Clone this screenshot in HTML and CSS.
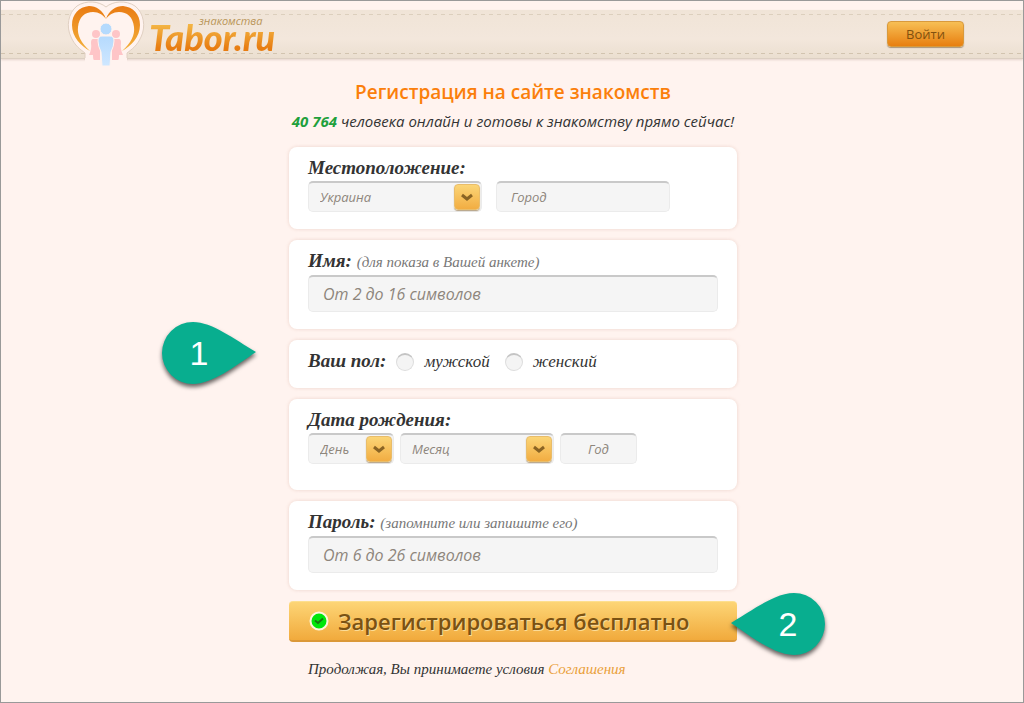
FILE: index.html
```
<!DOCTYPE html>
<html lang="ru">
<head>
  <meta charset="UTF-8">
  <meta name="viewport" content="width=device-width, initial-scale=1">
  <title>Tabor.ru</title>
  <link rel="stylesheet" href="styles.css">
</head>
<body>
  <header class="header">
    <div class="header-inner">
      <a href="#" class="logo">
        <svg class="logo-heart" width="80" height="68" viewBox="0 0 80 68" aria-hidden="true">
          <defs>
            <linearGradient id="heart" x1="0" y1="0" x2="0" y2="1">
              <stop offset="0" stop-color="#e97b12"/>
              <stop offset="1" stop-color="#f3b13c"/>
            </linearGradient>
            <linearGradient id="man" x1="0" y1="0" x2="0" y2="1">
              <stop offset="0" stop-color="#b5dafd"/>
              <stop offset="1" stop-color="#cfe7ff"/>
            </linearGradient>
          </defs>
          <path class="logo-back" d="M40 7C33 1 20 0 11 6C2 13 0 27 5 37C9 46 14 49 19 53V60H61V53C66 49 71 46 75 37C80 27 78 13 69 6C60 0 47 1 40 7Z"/>
          <path class="logo-under" d="M19 58H61V68H19Z"/>
          <path fill="url(#heart)" d="M40 19C37 10 30 6 23 6C13 7 6 14 6 25C6 37 15 46 24 51C15 43 11 35 12 27C13 17 19 12 27 12C33 12 37 15 40 19C43 15 47 12 53 12C61 12 67 17 68 27C69 35 65 43 56 51C65 46 74 37 74 25C74 14 67 7 57 6C50 6 43 10 40 19Z"/>
          <g fill="#fec5c7">
            <circle cx="30" cy="34" r="4"/>
            <circle cx="50" cy="34" r="4"/>
            <path d="M27 39H34V60H28Q27 60 27 55H23Q26 49 25 43Q25 39 27 39Z"/>
            <path d="M53 39H46V60H52Q53 60 53 55H57Q54 49 55 43Q55 39 53 39Z"/>
          </g>
          <circle cx="40" cy="29" r="6" fill="#b5dafd" stroke="#fff3ef"/>
          <path fill="url(#man)" stroke="#fff3ef" d="M36 36H44Q48 36 48 41Q48 46 45 52L44 66H36L35 52Q32 46 32 41Q32 36 36 36Z"/>
        </svg>
        <span class="logo-text">
          <span class="logo-tag">знакомства</span>
          <span class="logo-name">Tabor.ru</span>
        </span>
      </a>
      <button type="button" class="login">Войти</button>
    </div>
  </header>

  <main class="main">
    <h1>Регистрация на сайте знакомств</h1>
    <p class="online"><strong>40 764</strong> человека онлайн и готовы к знакомству прямо сейчас!</p>

    <form class="form">
      <div class="card">
        <label class="title" for="country">Местоположение:</label>
        <div class="row place">
          <span class="select">
            <select id="country"><option>Украина</option></select>
            <span class="arrow"><svg width="12" height="8" viewBox="0 0 12 8"><path d="M1 2L6 6L11 2"/></svg></span>
          </span>
          <input class="field city" type="text" placeholder="Город" aria-label="Город">
        </div>
      </div>

      <div class="card">
        <label class="title" for="name">Имя: <small>(для показа в Вашей анкете)</small></label>
        <input class="field big" type="text" id="name" placeholder="От 2 до 16 символов">
      </div>

      <div class="card gender">
        <span class="title">Ваш пол:</span>
        <label class="radio"><input type="radio" name="sex">мужской</label>
        <label class="radio"><input type="radio" name="sex">женский</label>
        <div class="pin pin-left">
          <svg width="94" height="62" viewBox="0 0 94 62"><path d="M94 30C72 17 50 0 31 0A31 31 0 0 0 31 62C50 62 72 45 94 30Z"/></svg>
          <span>1</span>
        </div>
      </div>

      <div class="card birth">
        <label class="title" for="day">Дата рождения:</label>
        <div class="row">
          <span class="select day">
            <select id="day"><option>День</option></select>
            <span class="arrow"><svg width="12" height="8" viewBox="0 0 12 8"><path d="M1 2L6 6L11 2"/></svg></span>
          </span>
          <span class="select month">
            <select aria-label="Месяц"><option>Месяц</option></select>
            <span class="arrow"><svg width="12" height="8" viewBox="0 0 12 8"><path d="M1 2L6 6L11 2"/></svg></span>
          </span>
          <input class="field year" type="text" placeholder="Год" aria-label="Год">
        </div>
      </div>

      <div class="card">
        <label class="title" for="pass">Пароль: <small>(запомните или запишите его)</small></label>
        <input class="field big" type="password" id="pass" placeholder="От 6 до 26 символов">
      </div>

      <div class="submit-row">
        <button type="submit" class="submit">
          <svg width="20" height="20" viewBox="0 0 20 20" aria-hidden="true">
            <circle cx="10" cy="10" r="8.500" fill="#00e60c" stroke="#fff6dc" stroke-width="2"/>
            <path d="M6 9.500L9 12L14 7.500" fill="none" stroke="#167a12" stroke-width="2"/>
          </svg>
          Зарегистрироваться бесплатно
        </button>
        <div class="pin pin-right">
          <svg width="94" height="62" viewBox="0 0 94 62"><path d="M0 30C22 17 44 0 63 0A31 31 0 0 1 63 62C44 62 22 45 0 30Z"/></svg>
          <span>2</span>
        </div>
      </div>
    </form>

    <p class="terms">Продолжая, Вы принимаете условия <a href="#">Соглашения</a></p>
  </main>
</body>
</html>
```
FILE: styles.css
```
* {
  box-sizing: border-box;
}
body {
  margin: 0;
  min-height: 100vh;
  padding-top: 9px;
  border: 1px solid #999;
  background: #fff3ef;
  color: #333;
  font-family: "Open Sans", "Noto Sans", sans-serif;
}

/* header */
.header {
  padding: 4px 0;
  background: linear-gradient(#f0e4d7, #f3e7dc 60%, #ebdfd0);
  border-bottom: 1px solid #dccfc2;
  box-shadow: 0 1px 2px rgba(120,90,60,0.2);
}
.header-inner {
  display: flex;
  align-items: center;
  justify-content: space-between;
  height: 40px;
  padding: 0 59px 0 65px;
  background:
    repeating-linear-gradient(90deg, #dccfbd 0 4px, transparent 4px 8px) top / 100% 1px no-repeat,
    repeating-linear-gradient(90deg, #d2c4af 0 4px, transparent 4px 8px) bottom / 100% 1px no-repeat;
}
.logo {
  display: flex;
  align-items: center;
  gap: 3px;
  text-decoration: none;
}
.logo-heart {
  position: relative;
  display: block;
}
.logo-back {
  fill: #fff3ef;
  stroke: #e0d0c2;
}
.logo-under {
  fill: #fff3ef;
}
.logo-text {
  position: relative;
}
.logo-name {
  display: block;
  padding: 5px 6px 0 0;
  font: italic 900 36px/40px Lato, sans-serif;
  color: transparent;
  background: linear-gradient(#f3b443 30%, #e87d12 80%);
  -webkit-background-clip: text;
  background-clip: text;
}
.logo-tag {
  position: absolute;
  top: 2px;
  left: 50px;
  font-size: 11px;
  line-height: 14px;
  font-style: italic;
  color: #b99558;
}
.login {
  width: 77px;
  height: 26px;
  padding: 0;
  border: 1px solid #d99a3c;
  border-radius: 4px;
  background: linear-gradient(#f7bf55, #e87f10);
  box-shadow: 0 1px 1px rgba(100,70,30,0.5);
  color: #81500f;
  font: 13px/20px "Open Sans", sans-serif;
  cursor: pointer;
}

/* content */
.main {
  width: 450px;
  max-width: 100%;
  margin: 0 auto;
  padding: 18px 0 0 2px;
}
h1 {
  margin: 0;
  font-size: 19px;
  line-height: 30px;
  font-weight: 600;
  text-align: center;
  color: #fb7f0b;
}
.online {
  margin: 0 0 12px;
  font-size: 15px;
  line-height: 28px;
  font-style: italic;
  text-align: center;
  white-space: nowrap;
}
.online strong {
  color: #1fa03c;
}
.form {
  display: flex;
  flex-direction: column;
  gap: 11px;
}
.card {
  padding: 9px 19px 17px;
  border-radius: 8px;
  background: #fff;
  box-shadow: 0 0 3px 1px rgba(200,150,130,0.2);
}
.title {
  display: block;
  margin-bottom: 1px;
  font: italic bold 19px/24px "Liberation Serif", serif;
}
.title small {
  font-size: 15px;
  font-weight: normal;
  color: #777;
}
.row {
  display: flex;
  gap: 6px;
}
.place {
  gap: 14px;
}
.field,
.select select {
  height: 31px;
  border: 1px solid #ebebeb;
  border-top: 2px solid #c9c9c9;
  border-radius: 5px;
  background: #f5f5f5;
  color: #8e867c;
  font: italic 13px/20px "Open Sans", sans-serif;
}
.field::placeholder {
  color: #8e867c;
  opacity: 1;
}
.city {
  width: 174px;
  padding: 0 14px;
}
.big {
  display: block;
  width: 100%;
  height: 37px;
  padding: 0 14px;
  font-size: 16px;
}
.year {
  width: 77px;
  padding: 0;
  text-align: center;
}
.select {
  position: relative;
  width: 174px;
}
.select select {
  width: 100%;
  padding: 0 11px;
  appearance: none;
}
.day {
  width: 86px;
}
.month {
  width: 154px;
}
.arrow {
  position: absolute;
  top: 3px;
  right: 2px;
  display: flex;
  align-items: center;
  justify-content: center;
  width: 26px;
  height: 26px;
  border: 1px solid #e9bd6a;
  border-radius: 4px;
  background: linear-gradient(#fbd577, #f2ad42);
  box-shadow: 0 1px 1px rgba(120,80,20,0.5);
  pointer-events: none;
}
.arrow svg {
  overflow: visible;
}
.arrow path {
  fill: none;
  stroke: #8a6424;
  stroke-width: 3;
}
.gender {
  position: relative;
  display: flex;
  align-items: center;
  height: 48px;
  padding-top: 3px;
  padding-bottom: 8px;
}
.radio {
  display: flex;
  align-items: center;
  gap: 10px;
  margin-left: 10px;
  font: italic 17px/24px "Liberation Serif", serif;
}
.radio + .radio {
  margin-left: 15px;
}
.radio input {
  appearance: none;
  width: 18px;
  height: 18px;
  margin: 0;
  border: 1px solid #ddd;
  border-top: 2px solid #c4c4c4;
  border-radius: 50%;
  background: #f4f4f4;
}
.radio input:checked {
  background: #f2ad42;
}
.birth {
  padding-bottom: 26px;
}

/* submit */
.submit-row {
  position: relative;
}
.submit {
  display: flex;
  align-items: center;
  gap: 9px;
  width: 100%;
  height: 41px;
  padding: 0 20px;
  border: 0;
  border-top: 1px solid #fddf8f;
  border-bottom: 2px solid #db9838;
  border-radius: 4px;
  background: linear-gradient(#fdd576, #f1aa3c);
  color: #7a5213;
  font: 600 22px/30px "Open Sans", sans-serif;
  text-shadow: 1px 1px 0 #fbdc98;
  white-space: nowrap;
  cursor: pointer;
}
.terms {
  margin: 0;
  padding: 15px 19px;
  font: italic 15px/24px "Liberation Serif", serif;
  white-space: nowrap;
}
.terms a {
  color: #eaa03a;
  text-decoration: none;
}

/* numbered pins */
.pin {
  position: absolute;
  color: #fff;
  font: 34px/62px "Liberation Sans", sans-serif;
}
.pin svg {
  display: block;
  overflow: visible;
  fill: #08ae8f;
  filter: drop-shadow(0 3px 2px rgba(0,0,0,0.6));
}
.pin span {
  position: absolute;
  top: 0;
  width: 74px;
  text-align: center;
}
.pin-left {
  top: -18px;
  right: 100%;
  margin-right: 33px;
}
.pin-left span {
  left: 0;
}
.pin-right {
  top: -8px;
  right: -88px;
}
.pin-right span {
  right: 0;
}
```
